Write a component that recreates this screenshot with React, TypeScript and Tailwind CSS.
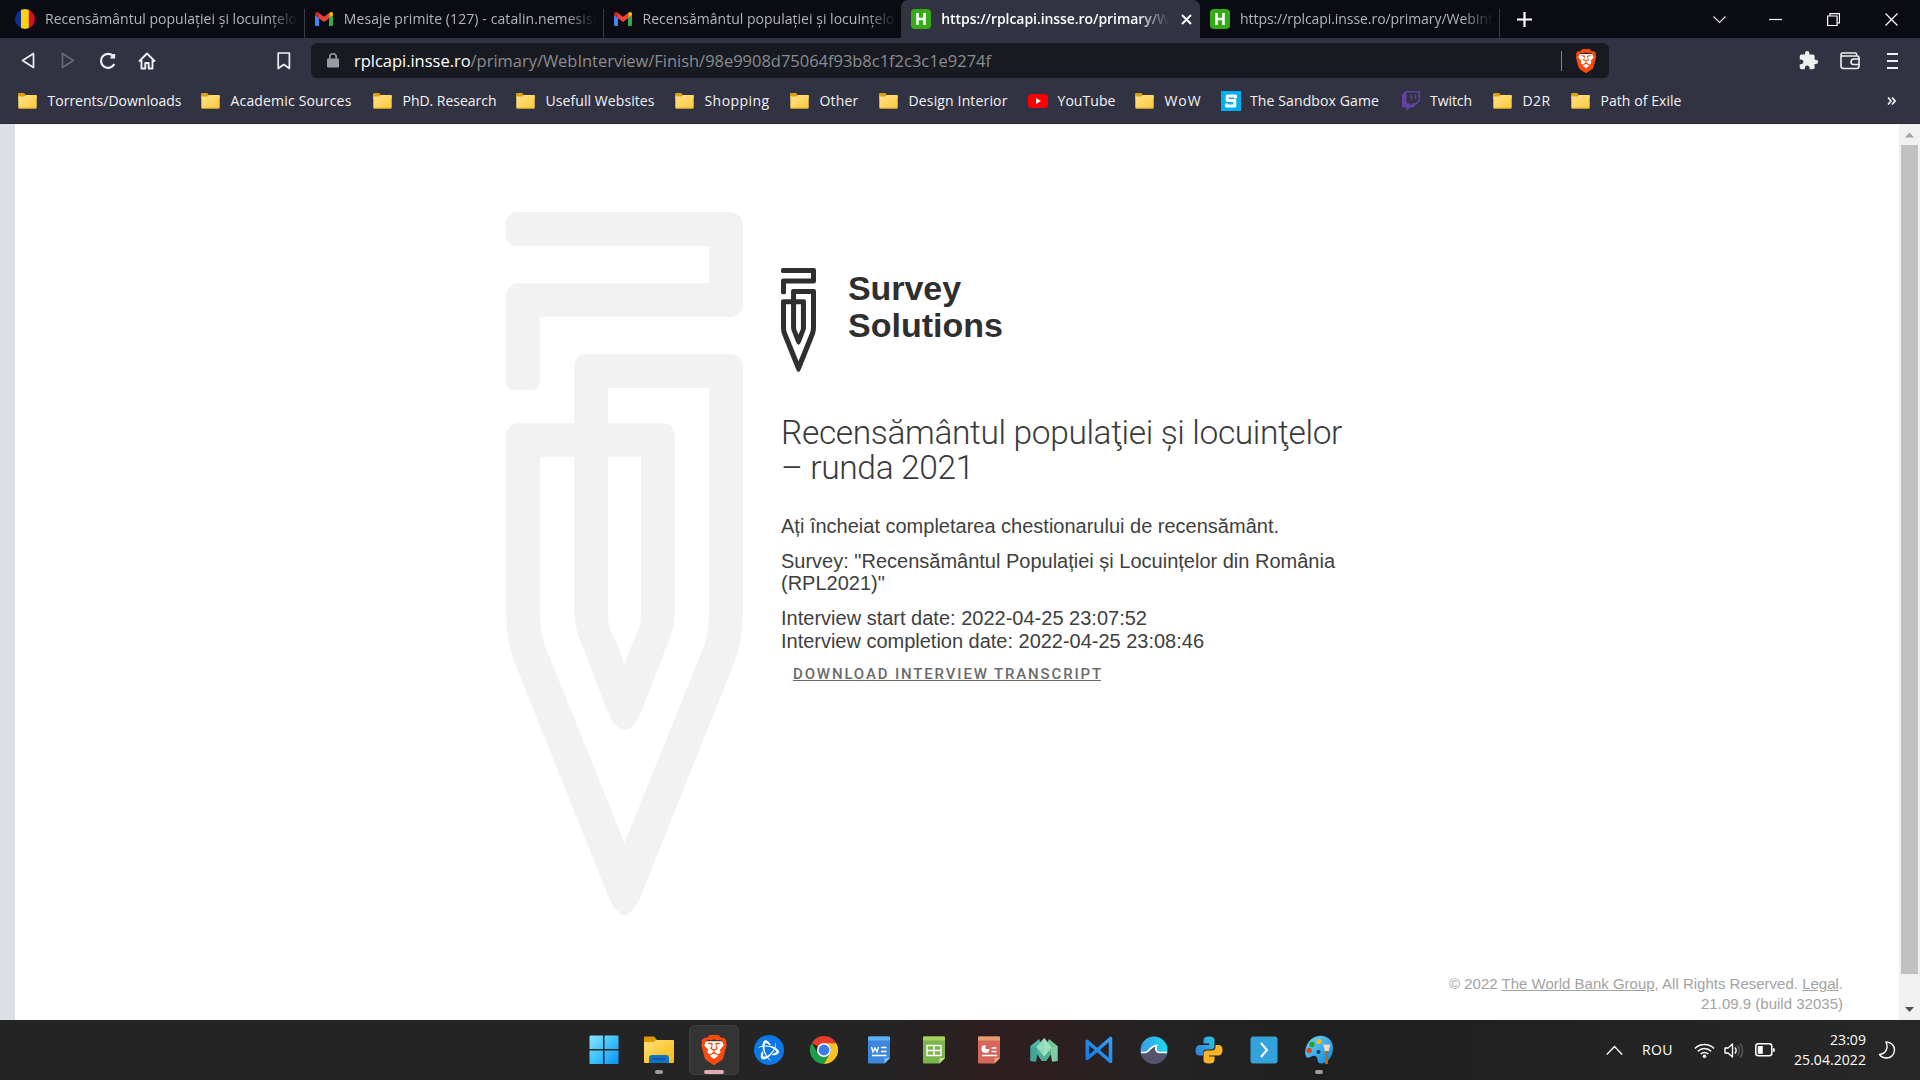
import { useLayoutEffect, useRef, useState, type ReactNode } from "react";
import { SiBrave, SiBattledotnet } from "react-icons/si";
import { FaTwitch } from "react-icons/fa";
import { MdExtension } from "react-icons/md";

/* Text whose letter spacing is adjusted so that it spans an exact width. */
function FitText({ width, children, className = "" }: { width: number; children: ReactNode; className?: string }) {
  const ref = useRef<HTMLSpanElement>(null);
  const [spacing, setSpacing] = useState(0);
  useLayoutEffect(() => {
    const el = ref.current;
    if (!el) return;
    const count = (el.textContent ?? "").length;
    setSpacing((s) => s + (width - el.getBoundingClientRect().width) / count);
  }, [width]);
  return (
    <span ref={ref} className={"inline-block whitespace-pre " + className} style={{ letterSpacing: spacing }}>
      {children}
    </span>
  );
}

const UI = "font-['Open_Sans','Noto_Sans',sans-serif]";

/* ---------- icons ---------- */

function RomaniaIcon() {
  return (
    <svg className="h-5 w-5 shrink-0" viewBox="0 0 20 20">
      <clipPath id="ro"><circle cx="10" cy="10" r="10" /></clipPath>
      <g clipPath="url(#ro)">
        <rect width="6.5" height="20" fill="#0a2f8f" />
        <rect x="6" width="8" height="20" fill="#fcd116" />
        <rect x="13.8" width="7" height="20" fill="#ce1126" />
      </g>
    </svg>
  );
}

function GmailIcon() {
  return (
    <svg className="h-5 w-5 shrink-0" viewBox="0 0 20 20">
      <path d="M1 17V6l4 3v8H2.500Q1 17 1 16Z" fill="#4285f4" />
      <path d="M15 9l4-3v10q0 1-1 1h-3Z" fill="#34a853" />
      <path d="M1 5Q1 3 3 3q.8 0 1.500.5L5 4v5L1 6.200Z" fill="#c5221f" />
      <path d="M15 4l.8-.6Q19 2 19 5v1.200L15 9Z" fill="#fbbc04" />
      <path d="M4.500 3.700L10 7.800l5.500-4.100V9L10 13L4.500 9Z" fill="#ea4335" />
    </svg>
  );
}

function HIcon() {
  return (
    <span className="flex h-5 w-5 shrink-0 items-center justify-center rounded-[4px] bg-[#36ab16]">
      <svg className="h-3 w-3" viewBox="0 0 12 12" stroke="#fff" strokeWidth="2.6" fill="none">
        <path d="M2.500 0v12M9.500 0v12M2.500 6h7" />
      </svg>
    </span>
  );
}

function FolderIcon() {
  return (
    <svg className="h-4 w-[19px] shrink-0" viewBox="0 0 19 16">
      <defs>
        <linearGradient id="fold" x1="0" y1="0" x2="1" y2="1">
          <stop offset="0" stopColor="#ffe38a" />
          <stop offset="1" stopColor="#fcc93b" />
        </linearGradient>
      </defs>
      <path d="M0 1.200Q0 0 1.200 0H6l2 2h9.800q1.200 0 1.200 1.200V5H0Z" fill="#dba013" />
      <path d="M.3 3.500L6.500 3.500 8.200 2H17.700q1 0 1 1V14.500q0 1-1 1H1.300q-1 0-1-1Z" fill="url(#fold)" />
      <path d="M.8 15.300H18.200" stroke="#c99a2c" strokeWidth="1" />
    </svg>
  );
}

function YouTubeIcon() {
  return (
    <svg className="h-[14px] w-5 shrink-0" viewBox="0 0 20 14">
      <rect width="20" height="14" rx="3.500" fill="#f00" />
      <path d="M8 4l5 3-5 3Z" fill="#fff" />
    </svg>
  );
}

function SandboxIcon() {
  return (
    <svg className="h-5 w-5 shrink-0" viewBox="0 0 20 20">
      <rect width="20" height="20" fill="#00adef" />
      <path d="M14.500 7.600V5H6.200v4.600h7.600V15H5.500v-2.600" fill="none" stroke="#fff" strokeWidth="3" strokeLinejoin="round" />
    </svg>
  );
}

function BraveIcon({ className }: { className: string }) {
  return (
    <span className={"relative inline-flex shrink-0 " + className}>
      <svg viewBox="0 0 24 24" className="absolute inset-0 h-full w-full">
        <path d="M5 5h14l1 4-3 9-5 4-5-4L4 9Z" fill="#fff" />
      </svg>
      <SiBrave className="relative h-full w-full text-[#fb4a0c]" />
    </span>
  );
}

/* Folded-ribbon pencil mark, used as the small logo and as the large watermark. */
function PencilMark({ className }: { className: string }) {
  return (
    <svg className={className} viewBox="506 212 237 703" preserveAspectRatio="none" fill="currentColor">
      <path d="M519 212H729Q743 212 743 227V302Q743 317 729 317H540V380Q540 390 530 390H516Q506 390 506 380V298Q506 283 520 283H709V246H516Q506 246 506 234V224Q506 212 519 212Z" />
      <path
        fillRule="evenodd"
        d="M506 438Q506 423 520 423H574V369Q574 354 588 354H729Q743 354 743 369V605C743 632 740 648 733 666L644 888Q634 915 624.500 915Q615 915 605 888L516 666C509 648 506 632 506 605Z
        M608 388H709V605C709 622 708 638 702 651L624.500 843L547 651C541 638 540 622 540 605V457H574V605C574 622 576 632 582 645L607 710Q615 730 624.500 730Q634 730 642 710L667 645C673 632 675 622 675 605V438Q675 423 661 423H608Z
        M608 457H641V605C641 620 641 627 635 637L624.500 664L614 637C608 627 608 620 608 605Z"
      />
    </svg>
  );
}

/* ---------- browser chrome ---------- */

function Tab({ icon, children, active = false, divider = true }: { icon: ReactNode; children: ReactNode; active?: boolean; divider?: boolean }) {
  return (
    <div
      className={
        "flex h-[38px] w-[298.75px] shrink-0 items-center pl-[10px] text-[14px] leading-[38px] " +
        (active ? "rounded-t-[7px] bg-[#313342] font-semibold text-white " : "text-[#b4b5ba] ")
      }
    >
      {icon}
      <div className={"ml-[10px] h-[38px] overflow-hidden whitespace-nowrap pb-px " + (active ? "w-[228px] [mask-image:linear-gradient(to_right,#000_86%,transparent)]" : "w-[253px] [mask-image:linear-gradient(to_right,#000_88%,transparent)]")}>
        {children}
      </div>
      {active && (
        <svg className="ml-[12px] h-[11px] w-[11px] shrink-0" viewBox="0 0 11 11" stroke="#fff" strokeWidth="2">
          <path d="M1 1l9 9M10 1l-9 9" />
        </svg>
      )}
      {divider && !active && <div className="-mr-px ml-auto h-[29px] w-px shrink-0 self-end bg-[#3c3d45]" />}
    </div>
  );
}

function TabStrip() {
  return (
    <div className="flex h-[38px] items-center bg-[#0b0b14] pl-[5px]">
      <Tab icon={<RomaniaIcon />}><FitText width={252}>Recensământul populației și locuințelo</FitText></Tab>
      <Tab icon={<GmailIcon />}><FitText width={249}>Mesaje primite (127) - catalin.nemesis</FitText>@</Tab>
      <Tab icon={<GmailIcon />} divider={false}><FitText width={252}>Recensământul populației și locuințelo</FitText></Tab>
      <Tab icon={<HIcon />} active><FitText width={229}>https://rplcapi.insse.ro/primary/W</FitText></Tab>
      <Tab icon={<HIcon />}><FitText width={253}>https://rplcapi.insse.ro/primary/WebInt</FitText></Tab>
      <svg className="ml-[18px] h-[15px] w-[15px]" viewBox="0 0 15 15" stroke="#fff" strokeWidth="2.200">
        <path d="M7.500 0v15M0 7.500h15" />
      </svg>
      <div className="ml-auto flex items-center gap-[45px] pr-[22px]">
        <svg className="mr-[-2px] h-[13px] w-[13px]" viewBox="0 0 13 13" fill="none" stroke="#e6e6e8" strokeWidth="1.100"><path d="M.5 3.500L6.500 9.500L12.500 3.500" /></svg>
        <svg className="h-[13px] w-[13px]" viewBox="0 0 13 13" stroke="#fff" strokeWidth="1.200"><path d="M0 6.500h13" /></svg>
        <svg className="h-[13px] w-[13px]" viewBox="0 0 13 13" fill="none" stroke="#fff" strokeWidth="1.200"><path d="M.6 3h9.500v9.500H.6ZM3 2.800V.6h9.500V10H10.500" /></svg>
        <svg className="h-[13px] w-[13px]" viewBox="0 0 13 13" stroke="#fff" strokeWidth="1.200"><path d="M.5.5l12 12M12.500.5l-12 12" /></svg>
      </div>
    </div>
  );
}

function Toolbar() {
  return (
    <div className="flex h-[45px] items-center bg-[#313342]">
      <div className="flex h-[45px] w-[311px] shrink-0 items-center pl-[21px]">
        <svg className="h-[18px] w-[14px]" viewBox="0 0 14 18" fill="none" stroke="#f0f0f2" strokeWidth="1.700" strokeLinejoin="round"><path d="M12.500 1.500v14L1.500 8.500Z" /></svg>
        <svg className="ml-[26px] h-[18px] w-[14px]" viewBox="0 0 14 18" fill="none" stroke="#676975" strokeWidth="1.700" strokeLinejoin="round"><path d="M1.500 1.500v14L12.500 8.500Z" /></svg>
        <svg className="ml-6 h-[18px] w-[18px]" viewBox="0 0 18 18" fill="none" stroke="#f0f0f2" strokeWidth="2.200"><path d="M14.500 4.500A7 7 0 1 0 15.300 12" /><path d="M11.500 5.500h3.500V2" fill="#f0f0f2" /></svg>
        <svg className="ml-[21px] h-[18px] w-[18px]" viewBox="0 0 18 18" fill="none" stroke="#f0f0f2" strokeWidth="1.900" strokeLinejoin="round"><path d="M1 9.500L9 1.500l8 8M3.500 8v8.500h3.800V11h3.400v5.500h3.800V8" /></svg>
        <svg className="ml-[121px] h-[18px] w-[14px]" viewBox="0 0 14 18" fill="none" stroke="#f0f0f2" strokeWidth="1.700" strokeLinejoin="round"><path d="M1.200 1h11.200v15.500L6.800 12.500 1.200 16.500Z" /></svg>
      </div>
      <div className="flex h-[35px] w-[1298px] shrink-0 items-center rounded-[6px] bg-[#181a21] pl-[16px]">
        <svg className="h-[15px] w-3" viewBox="0 0 12 15"><rect y="5.500" width="12" height="9" rx="1.200" fill="#9a9ca5" /><path d="M2.800 6V4a3.200 3.200 0 0 1 6.400 0V6" fill="none" stroke="#9a9ca5" strokeWidth="1.600" /></svg>
        <FitText width={637} className="ml-[15px] text-[16.5px] leading-[33px] text-[#8b8c8f]">
          <span className="text-white">rplcapi.insse.ro</span>/primary/WebInterview/Finish/98e9908d75064f93b8c1f2c3c1e9274f
        </FitText>
        <div className="ml-auto h-5 w-px bg-[#85868c]" />
        <BraveIcon className="ml-3 mr-[11px] h-6 w-6" />
      </div>
      <div className="ml-auto flex items-center pr-[22px]">
        <MdExtension className="mr-[21px] h-[21px] w-[21px] text-[#f0f0f2]" />
        <svg className="h-[18px] w-[21px]" viewBox="0 0 21 18" fill="none" stroke="#f0f0f2" strokeWidth="1.600" strokeLinejoin="round"><path d="M1 3.500V14Q1 16.500 3.500 16.500H16.500Q19 16.500 19 14V6Q19 4 17 4H2.500Q1 4 1 2.500T2.500 1H15.500Q16.500 1 16.800 3.500M20 7H13.500Q11 7.500 11 10T13.500 12.500H20" /></svg>
        <svg className="ml-[26px] h-[18px] w-[11px]" viewBox="0 0 11 18" stroke="#f0f0f2" strokeWidth="1.800"><path d="M0 2h11M0 9h11M0 16h11" /></svg>
      </div>
    </div>
  );
}

const bookmarks: { label: string; icon: ReactNode; width: number; box: string }[] = [
  { label: "Torrents/Downloads", icon: <FolderIcon />, width: 134, box: "w-[183px]" },
  { label: "Academic Sources", icon: <FolderIcon />, width: 121, box: "w-[172px]" },
  { label: "PhD. Research", icon: <FolderIcon />, width: 94, box: "w-[143px]" },
  { label: "Usefull Websites", icon: <FolderIcon />, width: 109, box: "w-[159px]" },
  { label: "Shopping", icon: <FolderIcon />, width: 65, box: "w-[115px]" },
  { label: "Other", icon: <FolderIcon />, width: 39, box: "w-[89px]" },
  { label: "Design Interior", icon: <FolderIcon />, width: 99, box: "w-[149px]" },
  { label: "YouTube", icon: <YouTubeIcon />, width: 58, box: "w-[107px]" },
  { label: "WoW", icon: <FolderIcon />, width: 37, box: "w-[85.5px]" },
  { label: "The Sandbox Game", icon: <SandboxIcon />, width: 129, box: "w-[180px]" },
  { label: "Twitch", icon: <FaTwitch className="h-5 w-5 shrink-0 text-[#6441a5]" />, width: 42, box: "w-[92.5px]" },
  { label: "D2R", icon: <FolderIcon />, width: 28, box: "w-[78px]" },
  { label: "Path of Exile", icon: <FolderIcon />, width: 81, box: "w-[112px]" },
];

function BookmarksBar() {
  return (
    <div className="flex h-[41px] items-center border-b border-[#2a2b36] bg-[#313342] pb-1 pl-[18px] pr-6 text-[14px] text-[#f4f4f6]">
      {bookmarks.map((b) => (
        <div key={b.label} className={"flex shrink-0 items-center " + b.box}>
          <span className="flex w-[29.5px] shrink-0 items-center">{b.icon}</span>
          <FitText width={b.width} className="leading-5">{b.label}</FitText>
        </div>
      ))}
      <svg className="ml-auto h-2 w-[9px]" viewBox="0 0 9 8" fill="none" stroke="#f0f0f2" strokeWidth="1.700"><path d="M1 .5L4 4 1 7.500M5 .5L8 4 5 7.500" /></svg>
    </div>
  );
}

/* ---------- page ---------- */

function SurveyPage() {
  return (
    <div className="flex h-[896px] bg-white font-['Liberation_Sans',Arial,sans-serif]">
      <div className="w-[15px] shrink-0 bg-[#dcdfe3]" />
      <main className="flex flex-1 flex-col">
        <div className="flex pl-[491px] pt-[88px]">
          <PencilMark className="h-[703px] w-[237px] text-[#f2f2f2]" />
          <section className="ml-[38px] w-[600px] pt-[56px] text-[20px] text-[#404040]">
            <div className="flex h-[104px] text-[#2f2f2f]">
              <PencilMark className="h-[104px] w-[35px]" />
              <div className="ml-[32px] pt-[2px] text-[34px] font-bold leading-[36.5px]">
                <div><FitText width={113}>Survey</FitText></div>
                <div><FitText width={155}>Solutions</FitText></div>
              </div>
            </div>
            <h1 className="mt-[43px] font-['Roboto',sans-serif] text-[33.5px] font-light leading-[35.200px] text-[#3a3a3a]">
              <FitText width={561}>Recensământul populaţiei și locuinţelor</FitText><br />
              <FitText width={193}>– runda 2021</FitText>
            </h1>
            <p className="mt-[30px] leading-[22px]"><FitText width={498}>Ați încheiat completarea chestionarului de recensământ.</FitText></p>
            <p className="mt-[13px] leading-[22px]">
              <FitText width={554}>Survey: "Recensământul Populației și Locuințelor din România</FitText><br />
              (RPL2021)"
            </p>
            <p className="mt-[13px] leading-[23px]">
              <FitText width={366}>Interview start date: 2022-04-25 23:07:52</FitText><br />
              <FitText width={423}>Interview completion date: 2022-04-25 23:08:46</FitText>
            </p>
            <a className="ml-3 mt-[12px] block h-[16px] w-[308px] border-b border-[#6b6b6b] font-['Roboto',sans-serif] text-[15px] font-medium leading-[18px] text-[#6b6b6b]">
              <FitText width={310}>DOWNLOAD INTERVIEW TRANSCRIPT</FitText>
            </a>
          </section>
        </div>
        <footer className="mb-[6px] ml-auto mr-[56px] mt-auto text-right text-[15px] leading-5 text-[#a3a3a3]">
          <div><FitText width={394}>© 2022 <span className="underline">The World Bank Group</span>, All Rights Reserved. <span className="underline">Legal</span>.</FitText></div>
          <div><FitText width={142}>21.09.9 (build 32035)</FitText></div>
        </footer>
      </main>
      <div className="flex w-[21px] shrink-0 flex-col items-center justify-between bg-[#f1f1f1]">
        <svg className="h-[21px] w-[21px]" viewBox="0 0 21 21"><path d="M6 13.500L10.500 8.500 15 13.500Z" fill="#a3a3a3" /></svg>
        <div className="mb-auto h-[829px] w-[17px] bg-[#c1c1c1]" />
        <svg className="h-[21px] w-[21px]" viewBox="0 0 21 21"><path d="M6 8L10.500 13 15 8Z" fill="#505050" /></svg>
      </div>
    </div>
  );
}

/* ---------- taskbar ---------- */

const svg30 = "h-[30px] w-[30px]";

function Windows() {
  return (
    <svg className={svg30} viewBox="0 0 30 30">
      <defs><linearGradient id="win" x1="0" y1="0" x2="1" y2="1"><stop offset="0" stopColor="#8be3ff" /><stop offset=".5" stopColor="#3cc3fb" /><stop offset="1" stopColor="#0a90f5" /></linearGradient></defs>
      <path d="M.5 1.500q0-1 1-1H14V14H.5ZM15.500.5H28.500q1 0 1 1V14H15.500ZM.5 15.500H14V29H1.500q-1 0-1-1ZM15.500 15.500H29.500V28q0 1-1 1H15.500Z" fill="url(#win)" />
    </svg>
  );
}
function Explorer() {
  return (
    <svg className={svg30} viewBox="0 0 30 30">
      <defs><linearGradient id="ex" x1="0" y1="0" x2="1" y2="1"><stop offset="0" stopColor="#ffe07a" /><stop offset="1" stopColor="#fbb90f" /></linearGradient></defs>
      <path d="M0 2.500Q0 1.500 1 1.500H10l3 3.500H20V10H0Z" fill="#dc9a06" />
      <path d="M0 7H9.500L12.500 5H29q1 0 1 1V27q0 1-1 1H1q-1 0-1-1Z" fill="url(#ex)" />
      <path d="M5 28V23q0-3 3-3H22q3 0 3 3V28Z" fill="#1273c4" />
      <path d="M8.500 24H21.500" stroke="#0a4a8c" strokeWidth="1.200" />
    </svg>
  );
}
function Bnet() {
  return (
    <span className="flex h-[30px] w-[30px] items-center justify-center rounded-full bg-[#0a78e6]">
      <SiBattledotnet className="h-[21px] w-[21px] text-white" />
    </span>
  );
}
function Chrome() {
  return (
    <svg className="h-7 w-7" viewBox="0 0 48 48">
      <path d="M24 24L3.200 12A24 24 0 0 1 44.800 12Z" fill="#e33b2e" />
      <path d="M3.200 12A24 24 0 0 0 24 48L34.400 30 24 24 13.600 30Z" fill="#1e9e4a" />
      <path d="M44.800 12A24 24 0 0 1 24 48L34.400 30 A12 12 0 0 0 24 12Z" fill="#fcc31e" />
      <path d="M24 12H44.800" stroke="#e33b2e" strokeWidth="1" />
      <circle cx="24" cy="24" r="12" fill="#fff" /><circle cx="24" cy="24" r="9.300" fill="#3b7ded" />
    </svg>
  );
}
function DocBase({ top, body, fold, children }: { top: string; body: string; fold: string; children: ReactNode }) {
  return (
    <svg className="h-7 w-6" viewBox="0 0 24 28">
      <path d="M1 1.500Q1 .5 2 .5H22q1 0 1 1V22L17.500 27.500H2q-1 0-1-1Z" fill={body} />
      <path d="M1 4.500V1.500Q1 .5 2 .5H22q1 0 1 1V4.500Z" fill={top} />
      <path d="M23 22L17.500 27.500V23q0-1 1-1Z" fill={fold} />
      {children}
    </svg>
  );
}
function Mesh() {
  return (
    <svg className={svg30} viewBox="0 0 30 30">
      <path d="M1.500 11L10 4 15 14 13 26 8 19 7 26.500 1.500 26Z" fill="#4db3a6" />
      <path d="M28.500 11L20 4 15 14 17 26 22 19 23 26.500 28.500 26Z" fill="#6fc596" />
      <path d="M8 16L15 20 22 16 22 19 17 26H13L8 19Z" fill="#4fae98" />
      <path d="M1.500 11L8 13V17L7 26.500 1.500 26Z" fill="#3fa698" />
      <path d="M28.500 11L22 13V17L23 26.500 28.500 26Z" fill="#7fcda2" />
      <path d="M15 3L22.500 12 15 21.500 7.500 12Z" fill="#93dbb9" />
      <path d="M15 3L22.500 12 15 21.500Z" fill="#a2dfc0" />
    </svg>
  );
}
function VS() {
  return (
    <svg className={svg30} viewBox="0 0 30 30" fill="none" strokeLinejoin="round">
      <defs><linearGradient id="vs" gradientUnits="userSpaceOnUse" x1="30" y1="0" x2="0" y2="30"><stop offset="0" stopColor="#37a4f5" /><stop offset="1" stopColor="#0f74e2" /></linearGradient></defs>
      <path d="M3.300 6.500V23.500L26.500 3.500V26.500Z" stroke="url(#vs)" strokeWidth="3.600" />
    </svg>
  );
}
function Wave() {
  return (
    <svg className={svg30} viewBox="0 0 30 30">
      <defs><linearGradient id="wv"><stop offset="0" stopColor="#3f9ce8" /><stop offset="1" stopColor="#19dcec" /></linearGradient></defs>
      <circle cx="15" cy="15" r="13.500" fill="url(#wv)" />
      <path d="M1.600 17H7C10 17 10.500 11 16.500 10.500 14.500 15 18 17.500 21 17H28.400A13.500 13.500 0 0 1 1.600 17Z" fill="#54536c" />
      <path d="M2 17.500H6.500C11 17 10 11.500 17.500 10.500 15.500 15 18 17.500 21 17.500H28" fill="none" stroke="#fff" strokeWidth="1.700" />
    </svg>
  );
}
function Python() {
  return (
    <svg className={svg30} viewBox="0 0 30 30">
      <defs><linearGradient id="py" x1="1" y1="0" x2="0" y2="1"><stop offset="0" stopColor="#2cc5de" /><stop offset="1" stopColor="#3579dd" /></linearGradient></defs>
      <path d="M9.500 8V5Q9.500 1.500 15 1.500T20.500 5V11Q20.500 14.500 17 14.500H12.500Q9 14.500 9 18V20.500H5.500Q1.500 20.500 1.500 15.500T5.500 10H15V8.500H9.500Z" fill="url(#py)" />
      <path d="M20.500 22V25Q20.500 28.500 15 28.500T9.500 25V19Q9.500 15.500 13 15.500H17.500Q21.500 15.500 21.500 12V10H24.500Q28.500 10 28.500 15T24.500 20.500H15V21.500H20.500Z" fill="#fcb32a" />
    </svg>
  );
}
function Shell() {
  return (
    <svg className={svg30} viewBox="0 0 30 30">
      <rect x="1.500" y="1.500" width="27" height="27" rx="3" fill="#35a3db" />
      <path d="M12 8L18 15 12 22" fill="none" stroke="#fff" strokeWidth="2" />
    </svg>
  );
}
function Paint() {
  return (
    <svg className={svg30} viewBox="0 0 30 30">
      <defs><linearGradient id="pt" x1="0" y1="0" x2="1" y2="1"><stop offset="0" stopColor="#6fd6f7" /><stop offset="1" stopColor="#0b86dd" /></linearGradient></defs>
      <path d="M16.500.8C24 .8 29 6 29 13 29 22 23 28.500 17 28.500 12 28.500 15 22 11 21 7.500 20 4.500 25 2 21.500-1 16 4 .8 16.500.8Z" fill="url(#pt)" />
      <circle cx="15" cy="6.500" r="2.600" fill="#fdb813" /><circle cx="8" cy="9.500" r="2.700" fill="#22a51e" /><circle cx="5.200" cy="15.500" r="2.700" fill="#e2471f" />
      <circle cx="14.500" cy="17" r="2" fill="#173a55" />
      <path d="M21 16H24V28.500Q22.500 30 21 28.500Z" fill="#b9661a" />
      <path d="M19 9.500H26.500L25 14.500V16H20.500V14.500Z" fill="#f3d8be" />
    </svg>
  );
}

const apps: { name: string; icon: ReactNode; mark?: string; current?: boolean }[] = [
  { name: "start", icon: <Windows /> },
  { name: "explorer", icon: <Explorer />, mark: "w-2 bg-[#9c9c9c]" },
  { name: "brave", icon: <BraveIcon className="h-[30px] w-[30px]" />, mark: "w-5 bg-[#dfaeae]", current: true },
  { name: "battlenet", icon: <Bnet /> },
  { name: "chrome", icon: <Chrome /> },
  { name: "writer", icon: <DocBase top="#5ab2f5" body="#3f86dd" fold="#7cc3f7"><path d="M4.500 11l1.500 5L8 12l2 4L11.500 11M14 11.500h5.500M14 15.500h5.500M5 19.500h14.500" fill="none" stroke="#fff" strokeWidth="1.300" /></DocBase> },
  { name: "sheets", icon: <DocBase top="#a8d25e" body="#7cb54b" fold="#c4e08a"><path d="M5 9.500h14v10H5ZM5 14.500H19M12 9.500v10" fill="none" stroke="#fff" strokeWidth="1.400" /></DocBase> },
  { name: "slides", icon: <DocBase top="#e3a06c" body="#d4675a" fold="#e8a777"><path d="M8.500 9A4 4 0 1 0 12.500 13H8.500Z" fill="#fff" /><path d="M14.500 12h5M14.500 15.500h5M5 19.500h15" fill="none" stroke="#fff" strokeWidth="1.300" /></DocBase> },
  { name: "mesh", icon: <Mesh /> },
  { name: "vs", icon: <VS /> },
  { name: "wave", icon: <Wave /> },
  { name: "python", icon: <Python /> },
  { name: "shell", icon: <Shell /> },
  { name: "paint", icon: <Paint />, mark: "w-2 bg-[#9c9c9c]" },
];

function Taskbar() {
  return (
    <div className="flex h-[60px] items-center bg-[linear-gradient(to_right,#242424_0%,#242424_46%,#2d1f20_51%,#2d1f20_55%,#232323_61%,#1f1f1f_70%,#272727_100%)] pl-[576px] pr-[24px] text-white">
      {apps.map((a) => (
        <div key={a.name} className="flex w-[55px] shrink-0 justify-center">
          <div className={"relative flex h-[50px] w-[50px] items-center justify-center rounded-[5px] " + (a.current ? "border border-[#3e3e3e] bg-[#343434]" : "")}>
            {a.icon}
            {a.mark && <span className={"absolute left-1/2 h-1 -translate-x-1/2 rounded-full " + (a.current ? "bottom-0 " : "bottom-px ") + a.mark} />}
          </div>
        </div>
      ))}
      <div className="ml-auto flex items-center">
        <svg className="h-[17px] w-[17px]" viewBox="0 0 17 17" fill="none" stroke="#fff" strokeWidth="1.300"><path d="M.8 12.500L8.500 4.500l7.700 8" /></svg>
        <FitText width={31} className="ml-[19px] text-[14px] leading-5">ROU</FitText>
        <svg className="ml-[21px] h-[17px] w-[21px]" viewBox="0 0 21 17" fill="none" stroke="#fff" strokeWidth="1.500"><path d="M1 6.500a13.500 13.500 0 0 1 19 0M3.800 9.300a9.500 9.500 0 0 1 13.400 0M6.700 12a5.500 5.500 0 0 1 7.600 0" /><circle cx="10.500" cy="14.200" r="1.700" fill="#fff" stroke="none" /></svg>
        <svg className="ml-[9px] h-[17px] w-[21px]" viewBox="0 0 21 17" fill="none" stroke="#fff" strokeWidth="1.400" strokeLinejoin="round"><path d="M1 6H4L8.500 2V15L4 11H1ZM10.800 5.500a4 4 0 0 1 0 6" /><path d="M13.500 3.500a7.500 7.500 0 0 1 0 10M16 1.500a10.500 10.500 0 0 1 0 14" stroke="#5c5c5c" /></svg>
        <svg className="ml-[10px] h-[14px] w-5" viewBox="0 0 20 14"><rect x=".8" y=".8" width="16" height="12" rx="2.500" fill="none" stroke="#fff" strokeWidth="1.500" /><rect x="2.800" y="3" width="5" height="7.800" fill="#fff" /><path d="M18 5q2 0 2 2t-2 2Z" fill="#fff" /></svg>
        <div className="ml-[19px] w-[72px] text-right text-[14px] leading-5">
          <div><FitText width={36}>23:09</FitText></div>
          <div><FitText width={72}>25.04.2022</FitText></div>
        </div>
        <svg className="ml-[12px] h-[18px] w-[18px]" viewBox="0 0 18 18" fill="none" stroke="#fff" strokeWidth="1.400" strokeLinejoin="round"><path d="M8 1C13 1 16.500 4.500 16.500 9S13 17 8.500 17Q4 17 1.500 13.500C7 13 11 8 8 1Z" /></svg>
      </div>
    </div>
  );
}

export default function App() {
  return (
    <div className={"flex h-[1080px] w-[1920px] flex-col overflow-hidden " + UI}>
      <TabStrip />
      <Toolbar />
      <BookmarksBar />
      <SurveyPage />
      <Taskbar />
    </div>
  );
}
